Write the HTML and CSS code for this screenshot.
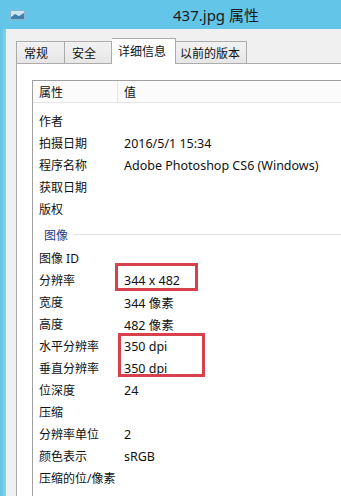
FILE: index.html
```html
<!DOCTYPE html>
<html lang="zh-CN">
<head>
    <meta charset="UTF-8">
    <title>437.jpg 属性</title>
    <link rel="stylesheet" href="styles.css">
</head>
<body>
    <div class="titlebar">
        <svg class="title-icon" width="15" height="10" viewBox="0 0 15 10">
            <rect x="0.5" y="0.5" width="14" height="9" fill="#eef6fb" stroke="#8fb3c9"/>
            <rect x="1" y="1" width="13" height="4" fill="#c9e4f3"/>
            <path d="M1 7 L5 4 L9 6 L14 3 L14 9 L1 9 Z" fill="#3d7fae"/>
        </svg>
        <span class="title-text">437.jpg 属性</span>
    </div>

    <div class="frame">
        <div class="frame-edge"></div>
        <div class="content">
            <div class="tabs">
                <div class="tab tab-1">常规</div>
                <div class="tab tab-2">安全</div>
                <div class="tab active">详细信息</div>
                <div class="tab tab-4">以前的版本</div>
            </div>

            <div class="panel">
                <div class="list">
                    <div class="list-header">
                        <div class="col-name">属性</div>
                        <div class="col-value">值</div>
                    </div>
                    <div class="rows">
                        <div class="row"><span class="name">作者</span><span class="value"></span></div>
                        <div class="row"><span class="name">拍摄日期</span><span class="value">2016/5/1 15:34</span></div>
                        <div class="row"><span class="name">程序名称</span><span class="value">Adobe Photoshop CS6 (Windows)</span></div>
                        <div class="row"><span class="name">获取日期</span><span class="value"></span></div>
                        <div class="row"><span class="name">版权</span><span class="value"></span></div>
                        <div class="group"><span>图像</span><i class="group-line"></i></div>
                        <div class="row"><span class="name">图像 ID</span><span class="value"></span></div>
                        <div class="row"><span class="name">分辨率</span><span class="value">344 x 482</span></div>
                        <div class="row"><span class="name">宽度</span><span class="value">344 像素</span></div>
                        <div class="row"><span class="name">高度</span><span class="value">482 像素</span></div>
                        <div class="row"><span class="name">水平分辨率</span><span class="value">350 dpi</span></div>
                        <div class="row"><span class="name">垂直分辨率</span><span class="value">350 dpi</span></div>
                        <div class="row"><span class="name">位深度</span><span class="value">24</span></div>
                        <div class="row"><span class="name">压缩</span><span class="value"></span></div>
                        <div class="row"><span class="name">分辨率单位</span><span class="value">2</span></div>
                        <div class="row"><span class="name">颜色表示</span><span class="value">sRGB</span></div>
                        <div class="row"><span class="name">压缩的位/像素</span><span class="value"></span></div>
                    </div>
                    <!-- 红框标注 -->
                    <div class="mark mark-size"></div>
                    <div class="mark mark-dpi"></div>
                </div>
            </div>
        </div>
    </div>
</body>
</html>
```

FILE: styles.css
```css
body {
    margin: 0;
    width: 341px;
    height: 496px;
    overflow: hidden;
    background-color: #f0f0f0;
    font-family: "Noto Sans", "Noto Sans CJK SC", sans-serif;
    font-size: 12px;
    color: #111;
}
.titlebar {
    height: 29px;
    background-color: #63c6e9;
    display: flex;
    align-items: center;
    box-sizing: border-box;
}
.title-icon {
    margin-left: 10px;
    margin-top: 0px;
}
.title-text {
    margin-left: 148px;
    font-size: 15px;
    color: #1b1b1b;
}
.frame {
    display: flex;
    height: 467px;
}
.frame-edge {
    width: 6px;
    background: linear-gradient(to right, #5ec3e6, #86d3ee);
}
.content {
    flex: 1;
    padding: 10px 0 0 10px;
    display: flex;
    flex-direction: column;
}
.tabs {
    display: flex;
    align-items: flex-end;
    height: 24px;
    position: relative;
    z-index: 1;
}
.tab {
    height: 22px;
    box-sizing: border-box;
    border: 1px solid #acacac;
    border-bottom: none;
    background: linear-gradient(#f2f2f2, #e6e6e6);
    padding: 0 0 0 7px;
    display: flex;
    align-items: center;
    color: #111;
}
.tab-1 { width: 49px; }
.tab-2 { width: 47px; border-left: none; }
.tab-4 { width: 71px; border-left: none; padding-left: 4px; }
.tab.active {
    width: 64px;
    height: 26px;
    margin-bottom: -1px;
    background: #fff;
    border-left: none;
    padding-bottom: 2px;
    padding-left: 6px;
}
.panel {
    flex: 1;
    background-color: #fff;
    border-top: 1px solid #acacac;
    border-left: 1px solid #acacac;
    padding: 16px 0 0 15px;
}
.list {
    position: relative;
    height: 100%;
    border-top: 1px solid #a0a0a0;
    border-left: 1px solid #a0a0a0;
}
.list-header {
    display: flex;
    height: 21px;
    align-items: center;
    background-color: #fbfbfb;
    border-bottom: 1px solid #e5e5e5;
}
.col-name {
    width: 78px;
    padding-left: 6px;
    height: 100%;
    display: flex;
    align-items: center;
    border-right: 1px solid #e5e5e5;
}
.col-value {
    padding-left: 6px;
}
.rows {
    padding-top: 7px;
}
.row {
    display: flex;
    height: 22px;
    align-items: center;
}
.name {
    width: 85px;
    padding-left: 6px;
    flex-shrink: 0;
}
.value {
    font-size: 12.5px;
}
.group {
    height: 27px;
    display: flex;
    align-items: center;
    padding: 2px 0 0 11px;
    box-sizing: border-box;
    color: #1e3b8c;
}
.group-line {
    flex: 1;
    height: 1px;
    margin-left: 6px;
    background-color: #e2e2e2;
}
.mark {
    position: absolute;
    border: 3px solid #d8414b;
    box-sizing: border-box;
}
.mark-size {
    left: 82px;
    top: 182px;
    width: 83px;
    height: 28px;
}
.mark-dpi {
    left: 85px;
    top: 252px;
    width: 87px;
    height: 44px;
}
```
